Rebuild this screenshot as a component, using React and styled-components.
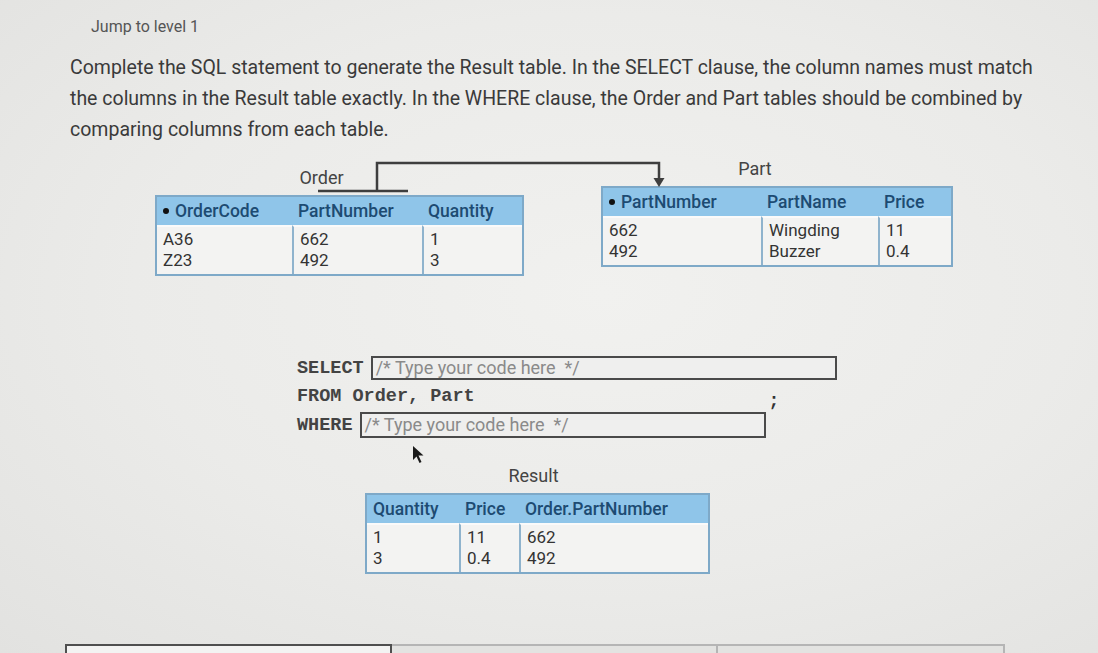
import React from "react";
import styled, { createGlobalStyle } from "styled-components";

const GlobalStyle = createGlobalStyle`
  html, body {
    margin: 0;
    padding: 0;
    overflow: hidden;
  }
  body {
    background: radial-gradient(ellipse at 55% 45%, #f1f1ef 0%, #ebebe9 55%, #e2e2e0 100%);
    font-family: Roboto, "Liberation Sans", sans-serif;
    color: #383838;
  }
`;

const order = {
  name: "Order",
  cols: "135px 130px 100px",
  top: 17,
  shift: 36,
  head: ["OrderCode", "PartNumber", "Quantity"],
  key: 0,
  body: [
    ["A36", "Z23"],
    ["662", "492"],
    ["1", "3"],
  ],
};

const part = {
  name: "Part",
  cols: "158px 117px 73px",
  top: 8,
  shift: 44,
  head: ["PartNumber", "PartName", "Price"],
  key: 0,
  body: [
    ["662", "492"],
    ["Wingding", "Buzzer"],
    ["11", "0.4"],
  ],
};

const result = {
  name: "Result",
  cols: "92px 60px 189px",
  top: 0,
  shift: 8,
  head: ["Quantity", "Price", "Order.PartNumber"],
  key: -1,
  body: [
    ["1", "3"],
    ["11", "0.4"],
    ["662", "492"],
  ],
};

const DataTable = ({ data }) => (
  <TableBlock $top={data.top}>
    <Caption $shift={data.shift}>{data.name}</Caption>
    <Grid $cols={data.cols}>
      {data.head.map((h, i) => (
        <HeadCell key={h}>
          {i === data.key && <Bullet />}
          {h}
        </HeadCell>
      ))}
      {data.body.map((col, i) => (
        <BodyCell key={i} $first={i === 0}>
          {col.map((v) => (
            <div key={v}>{v}</div>
          ))}
        </BodyCell>
      ))}
    </Grid>
  </TableBlock>
);

const App = () => {
  return (
    <Page>
      <GlobalStyle />
      <Jump>Jump to level 1</Jump>
      <Prompt>
        Complete the SQL statement to generate the Result table. In the SELECT
        clause, the column names must match the columns in the Result table
        exactly. In the WHERE clause, the Order and Part tables should be
        combined by comparing columns from each table.
      </Prompt>

      <Schema>
        <DataTable data={order} />
        <DataTable data={part} />
        <Connector width="620" height="50" viewBox="0 0 620 50">
          <path
            d="M248 41 H338 M307 41 V13 H589 V30"
            fill="none"
            stroke="#3e3e3e"
            strokeWidth="2.5"
          />
          <path d="M583.5 28 L594.5 28 L589 37 Z" fill="#3e3e3e" />
        </Connector>
      </Schema>

      <Sql>
        <SqlRow>
          <Keyword>SELECT</Keyword>
          <CodeBox $w={466} $h={24}>{"/* Type your code here  */"}</CodeBox>
        </SqlRow>
        <SqlRow>
          <Keyword>FROM Order, Part</Keyword>
        </SqlRow>
        <SqlRow>
          <Keyword>WHERE</Keyword>
          <CodeBox $w={406} $h={26}>{"/* Type your code here  */"}</CodeBox>
          <Semi>;</Semi>
        </SqlRow>
      </Sql>

      <ResultArea>
        <Pointer width="14" height="20" viewBox="0 0 14 20">
          <path d="M1 1 L1 15 L4.5 11.5 L7.5 18 L9.5 17 L6.5 10.5 L11.5 10.5 Z" fill="#1a1a1a" />
        </Pointer>
        <DataTable data={result} />
      </ResultArea>

      <Progress>
        <Step $active />
        <Step />
        <Step $last />
      </Progress>
    </Page>
  );
};

export default App;

const Page = styled.div`
  width: 1098px;
  height: 653px;
  box-sizing: border-box;
  padding: 17px 0 0 70px;
  overflow: hidden;
`;

const Jump = styled.div`
  margin-left: 21px;
  font-size: 16px;
  line-height: 20px;
  color: #555;
`;

const Prompt = styled.p`
  margin: 15px 0 0;
  width: 975px;
  font-size: 19.5px;
  line-height: 31px;
  color: #3a3a3a;
`;

const Schema = styled.div`
  position: relative;
  display: flex;
  align-items: flex-start;
  gap: 77px;
  padding-left: 85px;
  margin-top: 5px;
  height: 120px;
`;

const Connector = styled.svg`
  position: absolute;
  left: 0;
  top: 0;
`;

const TableBlock = styled.div`
  padding-top: ${(p) => p.$top}px;
  display: flex;
  flex-direction: column;
  width: max-content;
`;

const Caption = styled.div`
  font-size: 18px;
  line-height: 22px;
  text-align: center;
  padding-right: ${(p) => p.$shift}px;
  color: #444;
  margin-bottom: 6px;
`;

const Grid = styled.div`
  display: grid;
  grid-template-columns: ${(p) => p.$cols};
  border: 2px solid #7ea9c8;
  background: #f3f3f2;
  box-sizing: border-box;
`;

const HeadCell = styled.div`
  display: flex;
  align-items: center;
  background: #8fc5e9;
  color: #1d4b72;
  font-size: 17.5px;
  font-weight: 500;
  height: 28px;
  padding: 0 6px;
  white-space: nowrap;
`;

const Bullet = styled.span`
  display: inline-block;
  width: 6px;
  height: 6px;
  border-radius: 50%;
  background: #111;
  margin-right: 6px;
`;

const BodyCell = styled.div`
  border-left: ${(p) => (p.$first ? "none" : "2px solid #8fb3cd")};
  border-top: 2px solid #fafafa;
  padding: 2px 6px 3px;
  font-size: 17px;
  line-height: 21px;
  color: #333;
`;

const Sql = styled.div`
  margin-top: 86px;
  padding-left: 227px;
  display: flex;
  flex-direction: column;
  gap: 4px;
`;

const SqlRow = styled.div`
  display: flex;
  align-items: center;
  gap: 7px;
  min-height: 24px;
`;

const Keyword = styled.span`
  font-family: "Liberation Mono", "Courier New", monospace;
  font-weight: bold;
  font-size: 18.5px;
  color: #434343;
  white-space: pre;
`;

const CodeBox = styled.div`
  width: ${(p) => p.$w}px;
  height: ${(p) => p.$h}px;
  box-sizing: border-box;
  border: 2px solid #4a4a4a;
  background: #efefee;
  color: #8a8a8a;
  font-size: 18px;
  line-height: ${(p) => p.$h - 4}px;
  padding-left: 3px;
  white-space: pre;
`;

const Semi = styled.span`
  font-family: "Liberation Mono", "Courier New", monospace;
  font-weight: bold;
  font-size: 18px;
  color: #333;
  align-self: flex-start;
  margin: -21px 0 0 -4px;
`;

const ResultArea = styled.div`
  position: relative;
  margin-top: 27px;
  padding-left: 295px;
`;

const Pointer = styled.svg`
  position: absolute;
  left: 342px;
  top: -20px;
`;

const Progress = styled.div`
  display: grid;
  grid-template-columns: 327px 326px 287px;
  margin: 70px 0 0 -5px;
`;

const Step = styled.div`
  height: 20px;
  box-sizing: border-box;
  border: 2px solid ${(p) => (p.$active ? "#4f4f4f" : "#b5b5b5")};
  border-left-width: ${(p) => (p.$active ? "2px" : "0")};
  background: ${(p) => (p.$active ? "#f3f3f2" : "#e3e3e1")};
`;
